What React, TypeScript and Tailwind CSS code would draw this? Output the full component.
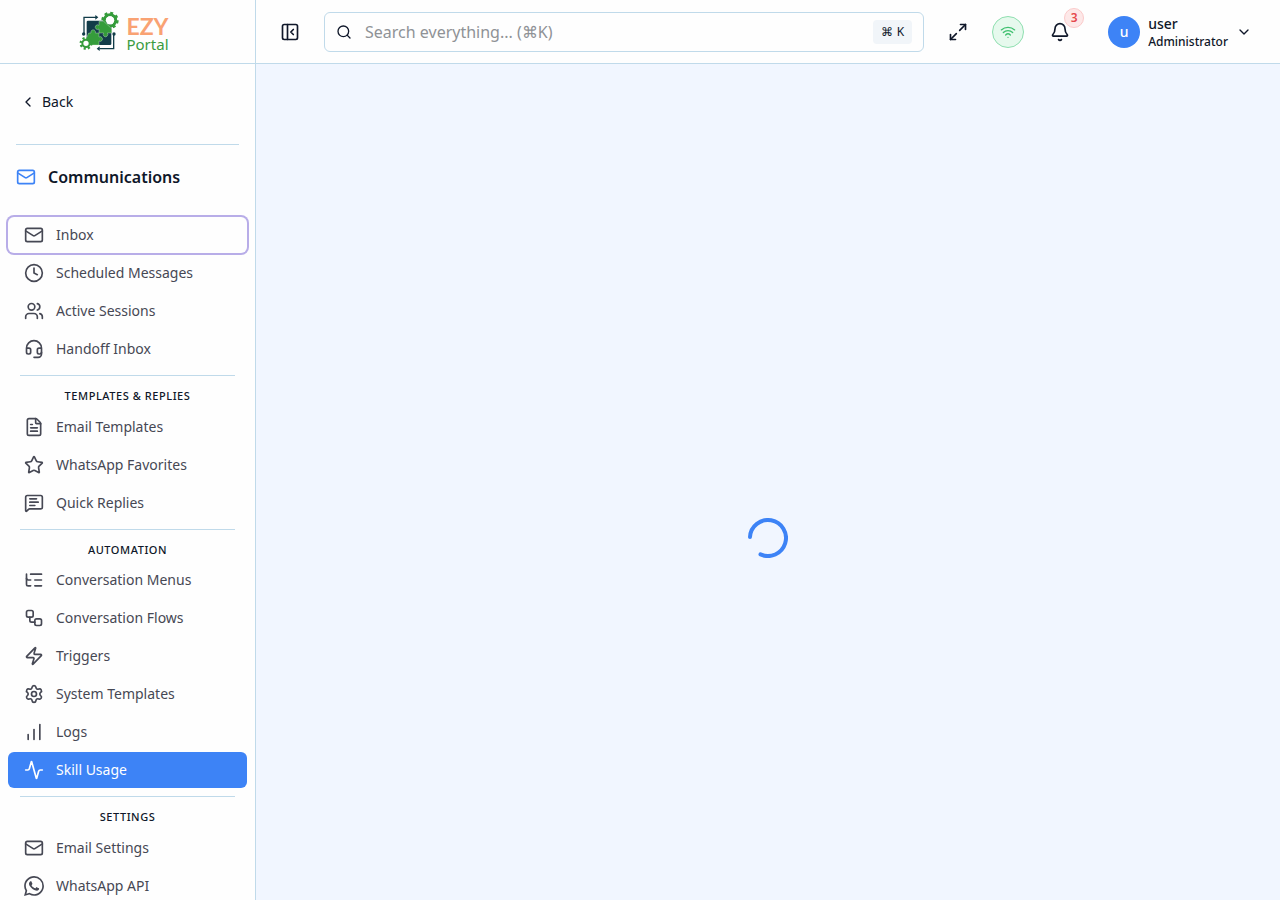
import type { ComponentType } from 'react';
import {
  Activity,
  Bell,
  ChartNoAxesColumnIncreasing,
  ChevronDown,
  ChevronLeft,
  Clock,
  FileText,
  Headset,
  ListTree,
  Mail,
  Maximize2,
  MessageSquareText,
  PanelLeftClose,
  Search,
  Settings,
  Star,
  Users,
  Wifi,
  Workflow,
  Zap,
} from 'lucide-react';
import { SiWhatsapp } from 'react-icons/si';

type NavItem = {
  label: string;
  icon: ComponentType<{ className?: string }>;
  active?: boolean;
  focused?: boolean;
};

type NavSection = { title?: string; items: NavItem[] };

const sections: NavSection[] = [
  {
    items: [
      { label: 'Inbox', icon: Mail, focused: true },
      { label: 'Scheduled Messages', icon: Clock },
      { label: 'Active Sessions', icon: Users },
      { label: 'Handoff Inbox', icon: Headset },
    ],
  },
  {
    title: 'Templates & Replies',
    items: [
      { label: 'Email Templates', icon: FileText },
      { label: 'WhatsApp Favorites', icon: Star },
      { label: 'Quick Replies', icon: MessageSquareText },
    ],
  },
  {
    title: 'Automation',
    items: [
      { label: 'Conversation Menus', icon: ListTree },
      { label: 'Conversation Flows', icon: Workflow },
      { label: 'Triggers', icon: Zap },
      { label: 'System Templates', icon: Settings },
      { label: 'Logs', icon: ChartNoAxesColumnIncreasing },
      { label: 'Skill Usage', icon: Activity, active: true },
    ],
  },
  {
    title: 'Settings',
    items: [
      { label: 'Email Settings', icon: Mail },
      { label: 'WhatsApp API', icon: SiWhatsapp },
    ],
  },
];

function LogoMark() {
  return (
    <svg viewBox="6 0 126 132" className="h-11 w-[42px] shrink-0" aria-hidden="true">
      <g fill="none" stroke="#123c49" strokeWidth="4">
        <path d="M24 70V22h36" />
        <path d="M113 74v42H70" />
      </g>
      <g fill="#123c49">
        <circle cx="23" cy="72" r="5" />
        <circle cx="114" cy="72" r="5" />
        <path d="M58 15l9 7-9 7z" />
        <path d="M71 109l-9 7 9 7z" />
        <rect x="32" y="32" width="74" height="73" rx="4" />
      </g>
      <g fill="none" stroke="#359c3b">
        <circle cx="102" cy="31" r="17" strokeWidth="9" />
        <circle cx="102" cy="31" r="22" strokeWidth="8" strokeDasharray="8.639 8.639" />
      </g>
      <path
        d="M69 34h14l24 22v13h-13a7 7 0 1 1-11 0H69V57a7 7 0 1 1 0-11z"
        fill="#359c3b"
        stroke="#e8f3ea"
        strokeWidth="1"
      />
      <circle cx="102" cy="31" r="12.500" fill="#ffffff" />
      <path
        d="M38 69h7a7 7 0 1 1 13 0h11v12a7 7 0 1 1 0 12v12H46L30 88z"
        fill="#359c3b"
        stroke="#e8f3ea"
        strokeWidth="1"
      />
      <circle cx="30" cy="100" r="11" fill="#ffffff" stroke="#359c3b" strokeWidth="6" />
      <circle cx="30" cy="100" r="16" fill="none" stroke="#359c3b" strokeWidth="7" strokeDasharray="6.283 6.283" />
    </svg>
  );
}

function NavLink({ item }: { item: NavItem }) {
  const Icon = item.icon;
  const tone = item.active ? 'bg-[#3d83f6] text-white' : 'text-[#464854]';
  const ring = item.focused ? 'ring-2 ring-[#b8ade8]' : '';
  return (
    <li>
      <a
        href="#"
        aria-current={item.active ? 'page' : undefined}
        className={`flex h-9 items-center gap-3 rounded-md px-4 text-sm ${tone} ${ring}`}
      >
        <Icon className="size-5 shrink-0" />
        {item.label}
      </a>
    </li>
  );
}

function Sidebar() {
  return (
    <aside className="flex w-64 shrink-0 flex-col border-r border-[#c0daea] bg-[#fefefe]">
      <div className="flex h-16 shrink-0 items-center justify-center gap-1.5 border-b border-[#c0daea] pr-2">
        <LogoMark />
        <div className="pt-1">
          <div className="font-['Lato',sans-serif] text-[23px] leading-5 font-bold text-[#f9a273]">EZY</div>
          <div className="text-[15px] leading-4 text-[#3b9b3f]">Portal</div>
        </div>
      </div>
      <div className="px-4 pt-5">
        <button type="button" className="flex h-9 items-center gap-1.5 px-1 text-sm">
          <ChevronLeft className="size-4" />
          Back
        </button>
        <div className="mt-6 flex items-center gap-3 border-t border-[#c0daea] pt-5">
          <Mail className="size-5 text-[#3d83f6]" />
          <h2 className="text-base font-semibold">Communications</h2>
        </div>
      </div>
      <nav className="min-h-0 flex-1 overflow-hidden px-2 pt-7">
        {sections.map((section, index) => (
          <section key={index}>
            {section.title && (
              <h3 className="mx-3 mt-2 border-t border-[#c0daea] pt-3 pb-1 text-center text-[11px] leading-normal font-medium tracking-wider uppercase">
                {section.title}
              </h3>
            )}
            <ul className="flex flex-col gap-0.5">
              {section.items.map((item) => (
                <NavLink key={item.label} item={item} />
              ))}
            </ul>
          </section>
        ))}
      </nav>
    </aside>
  );
}

function Header() {
  return (
    <header className="flex h-16 shrink-0 items-center gap-4 border-b border-[#c0daea] bg-[#fefefe] px-4">
      <button type="button" aria-label="Collapse sidebar" className="flex size-9 shrink-0 items-center justify-center">
        <PanelLeftClose className="size-5" />
      </button>
      <div className="relative min-w-0 flex-1">
        <Search className="absolute top-3 left-3 size-4" />
        <input
          type="search"
          aria-label="Search"
          placeholder="Search everything... (⌘K)"
          className="h-10 w-full rounded-md border border-[#c0daea] bg-transparent pr-16 pl-10 text-base outline-none placeholder:text-[#8f9296]"
        />
        <kbd className="absolute top-2 right-3 flex h-6 items-center gap-1 rounded bg-[#f1f5f9] px-2 font-['Noto_Sans',sans-serif] text-xs">
          <span>⌘</span>
          <span>K</span>
        </kbd>
      </div>
      <button type="button" aria-label="Full screen" className="flex size-9 shrink-0 items-center justify-center">
        <Maximize2 className="size-5" />
      </button>
      <button
        type="button"
        aria-label="Connection status"
        className="flex size-8 shrink-0 items-center justify-center rounded-full border border-[#8fdfb0] bg-[#e6f9ed] text-[#3fc06f]"
      >
        <Wifi className="size-4" />
      </button>
      <button type="button" aria-label="Notifications" className="relative flex size-10 shrink-0 items-center justify-center">
        <Bell className="size-5" />
        <span className="absolute -top-1 -right-1 flex size-5 items-center justify-center rounded-full border border-[#fbcaca] bg-[#fde8e8] text-xs font-semibold text-[#e5484d]">
          3
        </span>
      </button>
      <button type="button" className="flex h-12 shrink-0 items-center gap-2 px-3 text-left">
        <span className="flex size-8 items-center justify-center rounded-full bg-[#3d83f6] text-sm font-medium text-white">
          u
        </span>
        <span className="flex flex-col font-medium">
          <span className="text-sm leading-5">user</span>
          <span className="text-xs leading-4">Administrator</span>
        </span>
        <ChevronDown className="size-4" />
      </button>
    </header>
  );
}

export default function App() {
  return (
    <div className="flex h-screen overflow-hidden bg-[#f1f6ff] font-['Noto_Sans',sans-serif] text-[#0f1729]">
      <Sidebar />
      <div className="flex min-w-0 flex-1 flex-col">
        <Header />
        <main className="flex flex-1 items-center justify-center pt-28">
          <svg viewBox="0 0 40 40" className="size-10" role="status" aria-label="Loading">
            <path
              d="M2 19A18 18 0 1 1 12.500 36.400"
              fill="none"
              stroke="#3d83f6"
              strokeWidth="4"
              strokeLinecap="round"
            />
          </svg>
        </main>
      </div>
    </div>
  );
}
